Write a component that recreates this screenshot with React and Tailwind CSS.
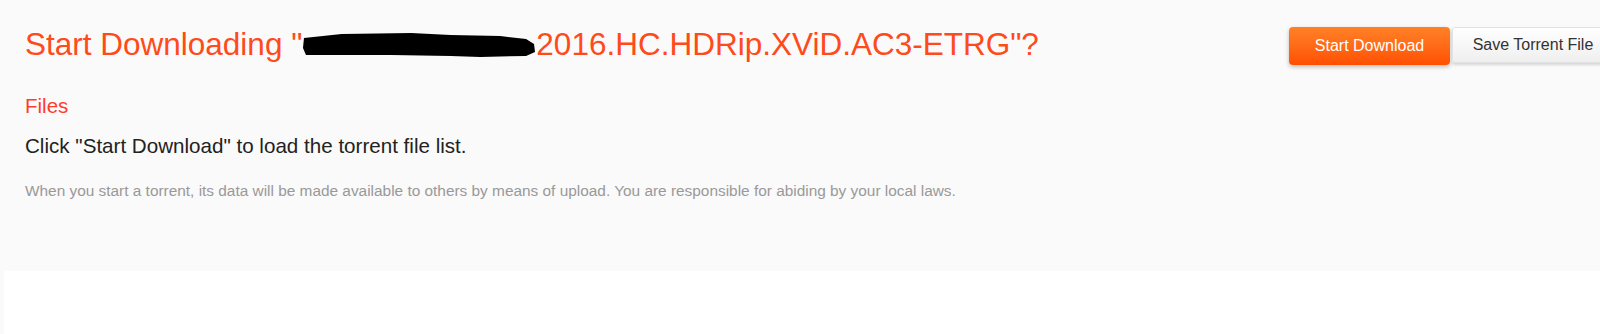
import React from "react";

const Redaction = () => (
  <svg
    width="234"
    height="30"
    viewBox="0 0 236 30"
    className="inline-block align-[-5px]"
    aria-hidden="true"
  >
    <path
      d="M2,8 L40,4 L110,3 L150,5 L200,6 L226,9 L234,14 L235,22 L226,26 L180,27 L150,26 L90,25 L40,25 L4,25 L1,18 Z"
      fill="#000"
    />
  </svg>
);

const App = () => {
  return (
    <div
      className="flex min-h-[334px] w-full flex-col overflow-hidden bg-[#fafafa]"
      style={{ fontFamily: '"Liberation Sans", Arial, sans-serif' }}
    >
      <div className="h-[271px] shrink-0 pl-[25px]">
        <div className="flex items-start">
          <h1 className="mt-[26px] flex-1 whitespace-nowrap text-[31.5px] leading-[36px] font-normal text-[#ff4a1a]">
            Start Downloading "<Redaction />2016.HC.HDRip.XViD.AC3-ETRG"?
          </h1>
          <div className="mt-[27px] -mr-[14px] flex shrink-0 items-start">
            <button className="h-[38px] w-[161px] rounded-[4px] bg-gradient-to-b from-[#ff8126] to-[#ff4f00] text-[16px] text-white shadow-[0_2px_4px_rgba(0,0,0,0.25)]">
              Start Download
            </button>
            <button className="ml-[2px] h-[36px] w-[162px] rounded-[3px] border border-[#e2e2e2] bg-gradient-to-b from-white to-[#efefef] text-[16px] text-[#333] shadow-[0_2px_3px_rgba(0,0,0,0.15)]">
              Save Torrent File
            </button>
          </div>
        </div>

        <h2 className="mt-[29px] text-[20.5px] leading-[24px] font-normal text-[#ff3d2e]">Files</h2>
        <p className="mt-[16px] text-[20.6px] leading-[24px] text-[#222]">
          Click "Start Download" to load the torrent file list.
        </p>
        <p className="mt-[24px] text-[15.4px] leading-[18px] text-[#999]">
          When you start a torrent, its data will be made available to others by means of upload. You are
          responsible for abiding by your local laws.
        </p>
      </div>
      <div className="flex flex-1 pl-[4px]">
        <div className="flex-1 bg-white" />
      </div>
    </div>
  );
};

export default App;
